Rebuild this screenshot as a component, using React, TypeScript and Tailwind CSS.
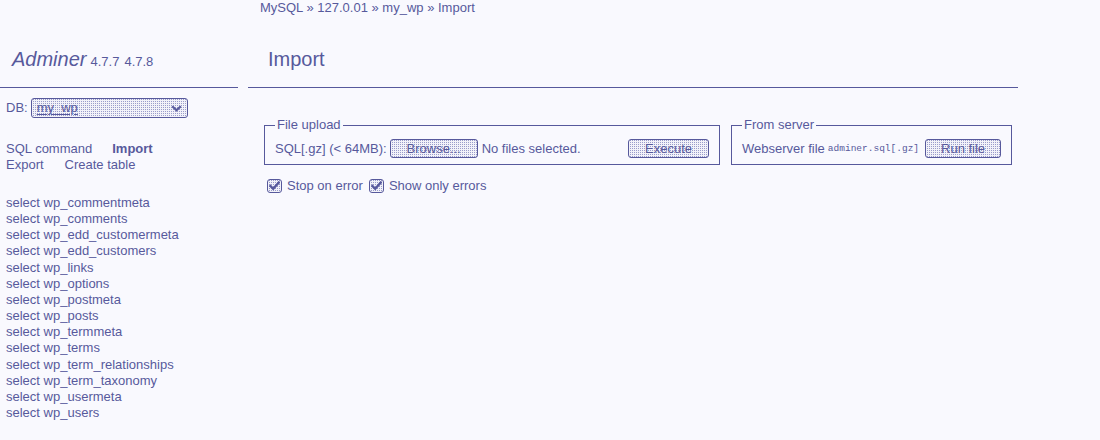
import React from 'react';

const tables = [
  'wp_commentmeta',
  'wp_comments',
  'wp_edd_customermeta',
  'wp_edd_customers',
  'wp_links',
  'wp_options',
  'wp_postmeta',
  'wp_posts',
  'wp_termmeta',
  'wp_terms',
  'wp_term_relationships',
  'wp_term_taxonomy',
  'wp_usermeta',
  'wp_users',
];

function Btn({ label, w }: { label: string; w: string }) {
  return (
    <span
      className={`${w} inline-flex h-[19px] shrink-0 items-center justify-center rounded-[3px] border border-[#57599c] bg-[#f2f2f9] bg-[image:conic-gradient(#9a9ccb_25%,transparent_0)] bg-[length:2px_2px] text-[13px] leading-none`}
    >
      {label}
    </span>
  );
}

function Check({ label, className = '' }: { label: string; className?: string }) {
  return (
    <label className={`flex items-center ${className}`}>
      <span className="flex h-[14px] w-[15px] items-center justify-center rounded-[3px] border border-[#57599c] bg-[#f2f2f9] bg-[image:conic-gradient(#9a9ccb_25%,transparent_0)] bg-[length:2px_2px]">
        <svg width="11" height="10" viewBox="0 0 11 10" fill="none">
          <path d="M1.5 5 L4.2 7.8 L9.8 1.5" stroke="#57599c" strokeWidth="2.4" strokeLinecap="square" />
        </svg>
      </span>
      <span className="ml-[5px]">{label}</span>
    </label>
  );
}

export default function App() {
  return (
    <div className="flex min-h-[440px] w-[1100px] bg-[#f9f9fe] font-['Liberation_Sans',Arial,sans-serif] text-[13px] leading-4 text-[#57599c]">
      {/* Menu */}
      <div className="w-[238px] shrink-0">
        <div className="h-[88px] border-b border-[#57599c] pt-[47px] pl-[12px]">
          <span className="text-[20px] leading-6 italic">Adminer</span>
          <span className="ml-[4px]">4.7.7</span>
          <span className="ml-[5px]">4.7.8</span>
        </div>

        <div className="mt-[10px] flex h-[20px] items-center pl-[6px]">
          <span>DB:</span>
          <span className="ml-[3px] flex h-[20px] w-[157px] items-center justify-between rounded-[3px] border border-[#57599c] bg-[#f2f2f9] bg-[image:conic-gradient(#9a9ccb_25%,transparent_0)] bg-[length:2px_2px] pr-[5px] pl-[5px]">
            <span className="underline underline-offset-2">my_wp</span>
            <svg width="11" height="7" viewBox="0 0 11 7" fill="none">
              <path d="M1.2 1.2 L5.5 5.3 L9.8 1.2" stroke="#57599c" strokeWidth="2.2" />
            </svg>
          </span>
        </div>

        <div className="mt-[23px] pl-[6px]">
          <div>
            <span>SQL command</span>
            <span className="ml-[20px] font-bold">Import</span>
          </div>
          <div>
            <span>Export</span>
            <span className="ml-[21px]">Create table</span>
          </div>
        </div>

        <ul className="mt-[22px] pl-[6px] leading-[16.15px]">
          {tables.map((t) => (
            <li key={t}>select {t}</li>
          ))}
        </ul>
      </div>

      {/* Content */}
      <div className="ml-[10px] w-[770px] shrink-0">
        <div className="h-[88px] border-b border-[#57599c]">
          <div className="pl-[12px]">MySQL » 127.0.01 » my_wp » Import</div>
          <h2 className="mt-[31px] pl-[20px] text-[20px] leading-6">Import</h2>
        </div>

        <div className="mt-[29px] flex items-start gap-[11px] pl-[16px]">
          <fieldset className="w-[456px] border border-[#57599c] px-[10px] pt-[6px] pb-[6px]">
            <legend className="px-[2px] leading-4">File upload</legend>
            <div className="flex h-[19px] items-center whitespace-nowrap">
              <span>SQL[.gz] (&lt; 64MB):</span>
              <span className="ml-[3px]">
                <Btn label="Browse..." w="w-[88px]" />
              </span>
              <span className="ml-[4px]">No files selected.</span>
              <span className="ml-auto">
                <Btn label="Execute" w="w-[81px]" />
              </span>
            </div>
          </fieldset>

          <fieldset className="w-[281px] border border-[#57599c] px-[10px] pt-[6px] pb-[6px]">
            <legend className="px-[2px] leading-4">From server</legend>
            <div className="flex h-[19px] items-center whitespace-nowrap">
              <span>Webserver file</span>
              <code className="ml-[3px] font-['Liberation_Mono',monospace] text-[9.5px]">adminer.sql[.gz]</code>
              <span className="ml-[6px]">
                <Btn label="Run file" w="w-[76px]" />
              </span>
            </div>
          </fieldset>
        </div>

        <div className="mt-[13px] flex h-[16px] items-center pl-[19px]">
          <Check label="Stop on error" />
          <Check label="Show only errors" className="ml-[6px]" />
        </div>
      </div>
    </div>
  );
}
